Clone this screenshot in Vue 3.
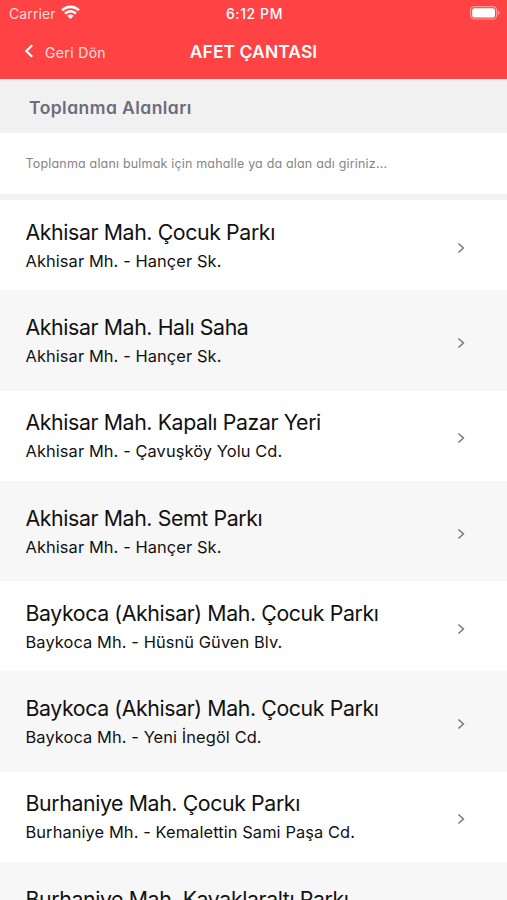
<template>
  <div class="screen">
    <header class="header">
      <div class="status-bar">
        <div class="carrier">
          <span>Carrier</span>
          <svg class="wifi" viewBox="0 0 20 15">
            <path d="M1.2 5.5a12.4 12.4 0 0 1 17.6 0" />
            <path d="M4.3 8.9a8 8 0 0 1 11.4 0" />
            <path class="wifi-dot" d="M10 14.6 6.6 11.3a4.8 4.8 0 0 1 6.8 0z" />
          </svg>
        </div>
        <span class="clock">6:12 PM</span>
        <svg class="battery" viewBox="0 0 30 14">
          <rect class="battery-frame" x="0.6" y="0.6" width="26" height="12.4" rx="3.6" />
          <rect class="battery-level" x="2.2" y="2.2" width="22.8" height="9.2" rx="2" />
          <path class="battery-tip" d="M27.8 4.4c2.3.8 2.3 4 0 4.8z" />
        </svg>
      </div>
      <div class="nav-bar">
        <a class="back" href="#" @click.prevent>
          <svg class="back-icon" viewBox="0 0 10 14">
            <path d="M8.2 1.2 2.3 7l5.9 5.8" />
          </svg>
          <span class="back-text">Geri Dön</span>
        </a>
        <h1>AFET ÇANTASI</h1>
      </div>
    </header>

    <div class="section-title">
      <h2>Toplanma Alanları</h2>
    </div>

    <div class="search">
      <input v-model="search" type="text" placeholder="Toplanma alanı bulmak için mahalle ya da alan adı giriniz..." />
    </div>

    <ul class="list">
      <li v-for="(alan, index) in filtered" :key="index" class="row">
        <div class="row-text">
          <h3>{{ alan.ad }}</h3>
          <p v-if="alan.adres">{{ alan.adres }}</p>
        </div>
        <svg class="chevron" viewBox="0 0 8 12">
          <path d="M1.4 1.5 6.4 6l-5 4.5" />
        </svg>
      </li>
    </ul>
  </div>
</template>

<script setup>
import { ref, computed } from 'vue';

const search = ref('');

const alanlar = [
  { ad: 'Akhisar Mah. Çocuk Parkı', adres: 'Akhisar Mh. - Hançer Sk.' },
  { ad: 'Akhisar Mah. Halı Saha', adres: 'Akhisar Mh. - Hançer Sk.' },
  { ad: 'Akhisar Mah. Kapalı Pazar Yeri', adres: 'Akhisar Mh. - Çavuşköy Yolu Cd.' },
  { ad: 'Akhisar Mah. Semt Parkı', adres: 'Akhisar Mh. - Hançer Sk.' },
  { ad: 'Baykoca (Akhisar) Mah. Çocuk Parkı', adres: 'Baykoca Mh. - Hüsnü Güven Blv.' },
  { ad: 'Baykoca (Akhisar) Mah. Çocuk Parkı', adres: 'Baykoca Mh. - Yeni İnegöl Cd.' },
  { ad: 'Burhaniye Mah. Çocuk Parkı', adres: 'Burhaniye Mh. - Kemalettin Sami Paşa Cd.' },
  { ad: 'Burhaniye Mah. Kavaklaraltı Parkı', adres: '' },
];

const filtered = computed(() => {
  const q = search.value.toLocaleLowerCase('tr');
  return alanlar.filter((a) => (a.ad + a.adres).toLocaleLowerCase('tr').includes(q));
});
</script>

<style>
body {
  margin: 0;
}
</style>

<style scoped>
.screen {
  height: 100vh;
  overflow: hidden;
  display: flex;
  flex-direction: column;
  background: #fff;
  font-family: Inter, "Liberation Sans", sans-serif;
}

h1,
h2,
h3,
p,
ul {
  margin: 0;
  padding: 0;
}

/* Header */
.header {
  flex: none;
  height: 79px;
  background: #ff4243;
  color: #fff;
}

.status-bar {
  height: 27px;
  display: grid;
  grid-template-columns: 1fr auto 1fr;
  align-items: center;
  padding: 0 7px 0 9px;
  font-size: 14px;
}

.carrier {
  display: flex;
  align-items: center;
  gap: 5px;
  letter-spacing: 0.1px;
  color: #ffdcdc;
}

.wifi {
  width: 19px;
  height: 14.5px;
  margin-top: -2px;
  fill: none;
  stroke: #fff;
  stroke-width: 2.7;
}

.wifi-dot {
  fill: #fff;
  stroke: none;
}

.clock {
  font-size: 14px;
  font-weight: 500;
  letter-spacing: 0.6px;
}

.battery {
  justify-self: end;
  width: 30px;
  height: 14px;
  margin-top: -1px;
}

.battery-frame {
  fill: none;
  stroke: #ff9c9c;
  stroke-width: 1.1;
}

.battery-level {
  fill: #fff;
}

.battery-tip {
  fill: #ff9c9c;
}

.nav-bar {
  height: 49px;
  display: grid;
  grid-template-columns: 1fr auto 1fr;
  align-items: center;
  padding: 0 24px;
}

.back {
  display: flex;
  align-items: center;
  gap: 11px;
  color: #ffe0e0;
  text-decoration: none;
}

.back-icon {
  width: 10px;
  height: 14px;
  margin-top: -2px;
  fill: none;
  stroke: #fff;
  stroke-width: 2.2;
}

.back-text {
  margin-top: 1px;
  font-size: 14px;
  letter-spacing: 0.35px;
}

h1 {
  font-size: 17.5px;
  font-weight: 600;
  letter-spacing: 0.05px;
}

/* Title and search */
.section-title {
  flex: none;
  height: 54px;
  display: flex;
  align-items: center;
  padding: 2px 29px 0;
  box-sizing: border-box;
  background: #f1f1f1;
}

h2 {
  font-size: 17.5px;
  font-weight: 600;
  letter-spacing: 0.45px;
  font-feature-settings: "cv11";
  color: #6d6b7d;
}

.search {
  flex: none;
  height: 67px;
  box-sizing: border-box;
  display: flex;
  align-items: center;
  padding: 0 25.5px;
  border-bottom: 6px solid #f1f1f1;
}

.search input {
  width: 100%;
  padding: 0;
  border: none;
  outline: none;
  background: none;
  font-family: inherit;
  font-size: 12.5px;
  letter-spacing: 0.18px;
  font-feature-settings: "cv11";
}

.search input::placeholder {
  color: #858585;
}

/* List */
.list {
  list-style: none;
}

.row {
  height: 90.4px;
  box-sizing: border-box;
  display: flex;
  justify-content: space-between;
  align-items: flex-start;
  padding: 17.6px 42px 0 25.5px;
  color: #111;
}

.row:nth-child(even) {
  height: 100.15px;
  padding-top: 22.6px;
  background: #f7f7f7;
}

h3 {
  font-size: 21.3px;
  line-height: 28px;
  font-weight: 400;
  letter-spacing: -0.39px;
}

p {
  margin-top: 3.2px;
  font-size: 16.4px;
  line-height: 24px;
  letter-spacing: 0.1px;
}

.chevron {
  width: 8px;
  height: 12px;
  margin-top: 24.3px;
  fill: none;
  stroke: #777;
  stroke-width: 1.5;
}
</style>
